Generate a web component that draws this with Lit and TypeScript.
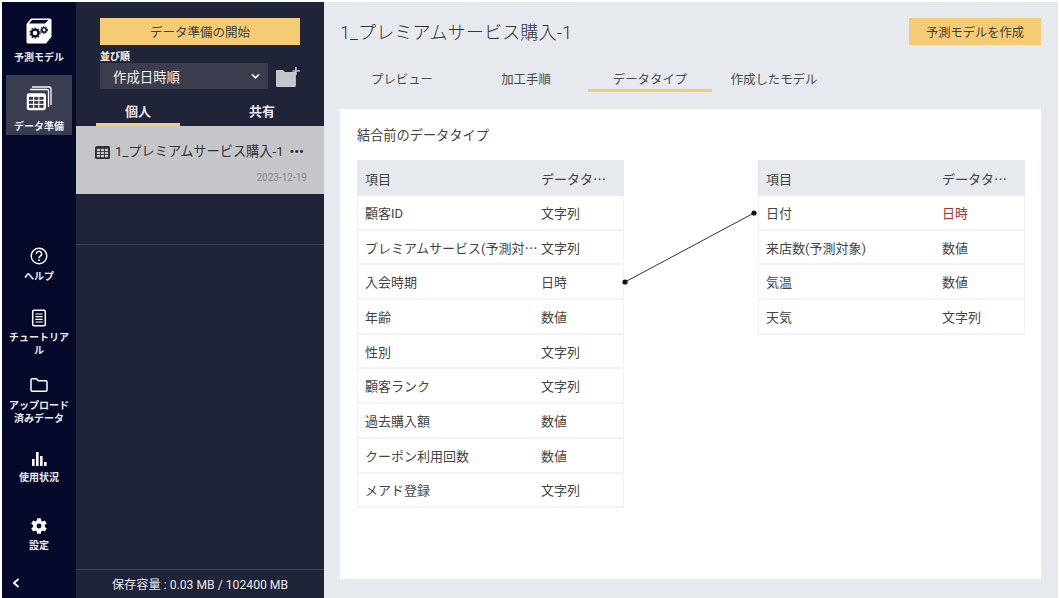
import { LitElement, html, css, svg } from 'lit';
import { customElement } from 'lit/decorators.js';

const dots = html`<span class="dots">…</span>`;

const leftRows = [
  [html`顧客ID`, '文字列'],
  [html`プレミアムサービス(予測対${dots}`, '文字列'],
  [html`入会時期`, '日時'],
  [html`年齢`, '数値'],
  [html`性別`, '文字列'],
  [html`顧客ランク`, '文字列'],
  [html`過去購入額`, '数値'],
  [html`クーポン利用回数`, '数値'],
  [html`メアド登録`, '文字列'],
];

const rightRows = [
  [html`日付`, '日時', true],
  [html`来店数(予測対象)`, '数値'],
  [html`気温`, '数値'],
  [html`天気`, '文字列'],
];

const gridIcon = (size: number) => svg`
  <svg width=${size} height=${size} viewBox="0 0 16 16">
    <rect x="0" y="1" width="16" height="14" rx="2" fill="currentColor"/>
    <g fill="var(--cell)">
      <rect x="2" y="4" width="3.4" height="2.4"/><rect x="6.3" y="4" width="3.4" height="2.4"/><rect x="10.6" y="4" width="3.4" height="2.4"/>
      <rect x="2" y="7.3" width="3.4" height="2.4"/><rect x="6.3" y="7.3" width="3.4" height="2.4"/><rect x="10.6" y="7.3" width="3.4" height="2.4"/>
      <rect x="2" y="10.6" width="3.4" height="2.4"/><rect x="6.3" y="10.6" width="3.4" height="2.4"/><rect x="10.6" y="10.6" width="3.4" height="2.4"/>
    </g>
  </svg>`;

@customElement('app-root')
export class AppRoot extends LitElement {
  static styles = css`
    :host {
      display: block;
      height: 598px;
      padding: 2px 2px 0 2px;
      box-sizing: border-box;
      background: #fff;
      font-family: Roboto, 'Noto Sans CJK JP', sans-serif;
      overflow: hidden;
    }
    .app { display: flex; height: 100%; }

    .rail {
      width: 74px;
      background: #040829;
      color: #fff;
      display: flex;
      flex-direction: column;
      align-items: center;
      flex: none;
    }
    .rail-item {
      width: 66px;
      display: flex;
      flex-direction: column;
      align-items: center;
      text-align: center;
      font-size: 10px;
      line-height: 13px;
      font-weight: 700;
      color: #e9ebf0;
    }
    .rail-item span { display: block; }
    .model { height: 74px; padding-top: 16px; box-sizing: border-box; gap: 7px; }
    .prep { height: 61px; background: #3a3c50; padding-top: 11px; box-sizing: border-box; gap: 8px; --cell: #3a3c50; }
    .help { margin-top: 112px; height: 63px; gap: 5px; }
    .tutorial { height: 69px; gap: 4px; }
    .upload { height: 75px; gap: 6px; }
    .usage { height: 67px; gap: 4px; }
    .settings { height: 52px; gap: 4px; }
    .collapse {
      margin-top: auto;
      height: 30px;
      width: 100%;
      padding-left: 10px;
      box-sizing: border-box;
      display: flex;
      align-items: center;
    }

    .side {
      width: 248px;
      flex: none;
      background: #1f2438;
      display: flex;
      flex-direction: column;
      color: #fff;
    }
    .side-top { padding: 16px 24px 0 24px; }
    .start {
      height: 27px;
      background: #f5cc74;
      color: #3f3f3f;
      font-size: 12.5px;
      display: flex;
      align-items: center;
      justify-content: center;
    }
    .sort-label { font-size: 10px; line-height: 12px; margin-top: 6px; font-weight: 700; }
    .sort-row { display: flex; align-items: center; gap: 8px; }
    .select {
      width: 169px;
      height: 26px;
      background: #3b3d4c;
      font-size: 13.4px;
      padding: 0 8px 0 13px;
      box-sizing: border-box;
      display: flex;
      align-items: center;
      justify-content: space-between;
      color: #f2f3f5;
    }
    .side-tabs { display: flex; padding: 0 20px; margin-top: 10px; font-size: 13px; font-weight: 700; }
    .side-tab { flex: none; width: 84px; height: 27px; text-align: center; line-height: 26px; box-sizing: border-box; color: #e8e9ec; }
    .side-tab.on { border-bottom: 3px solid #f5cc74; }
    .side-tab + .side-tab { width: 124px; margin-left: 20px; }
    .entry {
      height: 68px;
      background: #c4c6ca;
      color: #3b3b3b;
      padding: 14px 17px 0 19px;
      box-sizing: border-box;
      --cell: #c4c6ca;
    }
    .entry-line { display: flex; align-items: center; font-size: 13.2px; line-height: 24px; color: #333; }
    .entry-line svg { margin-right: 5px; flex: none; color: #2e2e30; }
    .entry-line .more { margin-left: 6px; font-weight: 700; line-height: 16px; }
    .entry-date { text-align: right; font-size: 10px; color: #85878c; margin-top: 7px; line-height: 14px; }
    .empty { height: 50px; border-bottom: 1px solid #3c4052; }
    .side-foot {
      margin-top: auto;
      height: 28px;
      border-top: 1px solid #3c4052;
      font-size: 12.2px;
      color: #e6e7ea;
      display: flex;
      align-items: center;
      justify-content: center;
    }

    .main {
      flex: 1;
      background: #e6e9ee;
      padding: 16px 17px 0 16px;
      box-sizing: border-box;
      display: flex;
      flex-direction: column;
      min-width: 0;
    }
    .head { display: flex; justify-content: space-between; align-items: center; height: 27px; }
    .title { font-size: 18.2px; font-weight: 300; color: #333; padding-bottom: 2px; }
    .create {
      width: 132px;
      height: 27px;
      background: #f5cc74;
      color: #3f3f3f;
      font-size: 12.25px;
      display: flex;
      align-items: center;
      justify-content: center;
    }
    .tabs { display: flex; margin-top: 19px; font-size: 12.4px; color: #4c4c4c; }
    .tab { width: 124px; height: 28px; line-height: 32px; text-align: center; box-sizing: border-box; }
    .tab.on { border-bottom: 3px solid #f5cc74; }
    .card {
      position: relative;
      margin-top: 17px;
      width: 701px;
      height: 470px;
      background: #fff;
      padding: 17px;
      box-sizing: border-box;
    }
    .card h2 { margin: 0; font-size: 13.2px; font-weight: 400; line-height: 18px; color: #444; padding-top: 1px; }
    .tables { display: flex; justify-content: space-between; width: 668px; margin-top: 15px; align-items: flex-start; }
    table { border-collapse: separate; border-spacing: 0; width: 267px; table-layout: fixed; font-size: 13px; color: #444; }
    th, td {
      padding: 0 0 0 8px;
      font-weight: 400;
      text-align: left;
      white-space: nowrap;
    }
    th { background: #e6e9ee; height: 36px; }
    td { height: 34.7px; box-sizing: border-box; border-bottom: 2px solid #f1f2f4; }
    tr > :first-child { width: 176px; box-sizing: border-box; }
    td:first-child { border-left: 1px solid #f1f2f4; padding-left: 7px; }
    td:last-child { border-right: 1px solid #f1f2f4; }
    td.hot { color: #a83232; }
    .dots { font-family: 'Noto Sans CJK JP', sans-serif; }
    .wire { position: absolute; left: 0; top: 0; pointer-events: none; }
  `;

  render() {
    return html`
      <div class="app">
        <nav class="rail">
          <div class="rail-item model">
            <svg width="26" height="26" viewBox="0 0 26 26">
              <path d="M5 0.5 H24 a1.5 1.5 0 0 1 1.5 1.5 V19 L20 25.5 H2 a1.5 1.5 0 0 1 -1.5 -1.5 V6 Z" fill="#fff"/>
              <path d="M6 2 H22.5 L19 5.5 H3 Z" fill="#040829"/>
              <circle cx="9" cy="15" r="3.4" fill="none" stroke="#040829" stroke-width="2.2"/>
              <circle cx="9" cy="15" r="5" fill="none" stroke="#040829" stroke-width="1.2" stroke-dasharray="1.6 1.6"/>
              <circle cx="18" cy="12" r="2.2" fill="none" stroke="#040829" stroke-width="1.6"/>
              <circle cx="18" cy="12" r="3.6" fill="none" stroke="#040829" stroke-width="1" stroke-dasharray="1.3 1.3"/>
            </svg>
            <span>予測モデル</span>
          </div>
          <div class="rail-item prep">
            <svg width="26" height="26" viewBox="0 0 26 26">
              <path d="M6 1 H23 a2 2 0 0 1 2 2 V19" fill="none" stroke="#fff" stroke-width="1.3"/>
              <path d="M4 3.5 H21 a1.5 1.5 0 0 1 1.5 1.5 V21" fill="none" stroke="#fff" stroke-width="1.3"/>
              <g transform="translate(0.5 6) scale(1.22)" color="#fff">${gridIcon(16)}</g>
            </svg>
            <span>データ準備</span>
          </div>
          <div class="rail-item help">
            <svg width="18" height="18" viewBox="0 0 18 18">
              <circle cx="9" cy="9" r="7.8" fill="none" stroke="#fff" stroke-width="1.4"/>
              <path d="M6.4 7 a2.6 2.6 0 1 1 3.9 2.2 c-.9.5 -1.3 1 -1.3 2" fill="none" stroke="#fff" stroke-width="1.4"/>
              <rect x="8.2" y="12.4" width="1.6" height="1.6" fill="#fff"/>
            </svg>
            <span>ヘルプ</span>
          </div>
          <div class="rail-item tutorial">
            <svg width="16" height="18" viewBox="0 0 16 18">
              <rect x="1.7" y="1.2" width="12.6" height="15.6" rx="1.2" fill="none" stroke="#fff" stroke-width="1.5"/>
              <path d="M4.4 5 H11.6 M4.4 7.7 H11.6 M4.4 10.4 H11.6 M4.4 13 H11.6" stroke="#fff" stroke-width="1.2"/>
            </svg>
            <span>チュートリアル</span>
          </div>
          <div class="rail-item upload">
            <svg width="18" height="16" viewBox="0 0 18 16">
              <path d="M1 3 a1.2 1.2 0 0 1 1.2 -1.2 H6.5 L8.3 3.8 H15.8 a1.2 1.2 0 0 1 1.2 1.2 V13 a1.2 1.2 0 0 1 -1.2 1.2 H2.2 A1.2 1.2 0 0 1 1 13 Z" fill="none" stroke="#fff" stroke-width="1.5"/>
            </svg>
            <span>アップロード<br />済みデータ</span>
          </div>
          <div class="rail-item usage">
            <svg width="16" height="16" viewBox="0 0 16 16" fill="#fff">
              <rect x="1" y="8" width="2.6" height="7"/><rect x="5" y="1" width="2.6" height="14"/>
              <rect x="9" y="5" width="2.6" height="10"/><rect x="13" y="11" width="2.6" height="4"/>
            </svg>
            <span>使用状況</span>
          </div>
          <div class="rail-item settings">
            <svg width="18" height="18" viewBox="3 2 20 20">
              <path fill="#fff" fill-rule="evenodd" d="M19.4 13a7.6 7.6 0 0 0 0-2l2.1-1.6-2-3.5-2.5 1a7.6 7.6 0 0 0-1.7-1L15 3.3h-4l-.4 2.6a7.6 7.6 0 0 0-1.7 1l-2.5-1-2 3.5L6.5 11a7.6 7.6 0 0 0 0 2l-2.1 1.6 2 3.5 2.5-1a7.6 7.6 0 0 0 1.7 1l.4 2.6h4l.4-2.6a7.6 7.6 0 0 0 1.7-1l2.5 1 2-3.5ZM13 14.7a2.7 2.7 0 1 1 0-5.4 2.7 2.7 0 0 1 0 5.4Z"/>
            </svg>
            <span>設定</span>
          </div>
          <div class="collapse">
            <svg width="8" height="10" viewBox="0 0 8 10"><path d="M6.5 1 L2 5 L6.5 9" fill="none" stroke="#fff" stroke-width="1.8"/></svg>
          </div>
        </nav>

        <aside class="side">
          <div class="side-top">
            <div class="start">データ準備の開始</div>
            <div class="sort-label">並び順</div>
            <div class="sort-row">
              <div class="select">
                <span>作成日時順</span>
                <svg width="9" height="7" viewBox="0 0 10 7"><path d="M1 1 L5 5 L9 1" fill="none" stroke="#fff" stroke-width="1.8"/></svg>
              </div>
              <svg width="24" height="22" viewBox="0 0 24 22">
                <path d="M0 6 a1 1 0 0 1 1 -1 H7 L9 7 H20 V21 a1 1 0 0 1 -1 1 H1 a1 1 0 0 1 -1 -1 Z" fill="#c4c6ca"/>
                <path d="M20 2 V10 M16.5 6 H24" stroke="#c4c6ca" stroke-width="1.6"/>
              </svg>
            </div>
          </div>
          <div class="side-tabs">
            <div class="side-tab on">個人</div>
            <div class="side-tab">共有</div>
          </div>
          <div class="entry">
            <div class="entry-line">
              ${gridIcon(15)}
              <span>1_プレミアムサービス購入-1</span>
              <span class="more">•••</span>
            </div>
            <div class="entry-date">2023-12-19</div>
          </div>
          <div class="empty"></div>
          <div class="side-foot">保存容量 : 0.03 MB / 102400 MB</div>
        </aside>

        <main class="main">
          <div class="head">
            <div class="title">1_プレミアムサービス購入-1</div>
            <div class="create">予測モデルを作成</div>
          </div>
          <div class="tabs">
            <div class="tab">プレビュー</div>
            <div class="tab">加工手順</div>
            <div class="tab on">データタイプ</div>
            <div class="tab">作成したモデル</div>
          </div>
          <section class="card">
            <h2>結合前のデータタイプ</h2>
            <div class="tables">
              ${this.renderTable(leftRows)}
              ${this.renderTable(rightRows)}
            </div>
            <svg class="wire" width="701" height="470">
              <line x1="285" y1="173" x2="414" y2="104" stroke="#333" stroke-width="1"/>
              <circle cx="285" cy="173" r="2.6" fill="#111"/>
              <circle cx="414" cy="104" r="2.6" fill="#111"/>
            </svg>
          </section>
        </main>
      </div>
    `;
  }

  renderTable(rows: unknown[][]) {
    return html`
      <table>
        <thead><tr><th>項目</th><th>データタ${dots}</th></tr></thead>
        <tbody>
          ${rows.map(
            (r) => html`<tr><td>${r[0]}</td><td class=${r[2] ? 'hot' : ''}>${r[1]}</td></tr>`
          )}
        </tbody>
      </table>
    `;
  }
}

declare global {
  interface HTMLElementTagNameMap {
    'app-root': AppRoot;
  }
}
